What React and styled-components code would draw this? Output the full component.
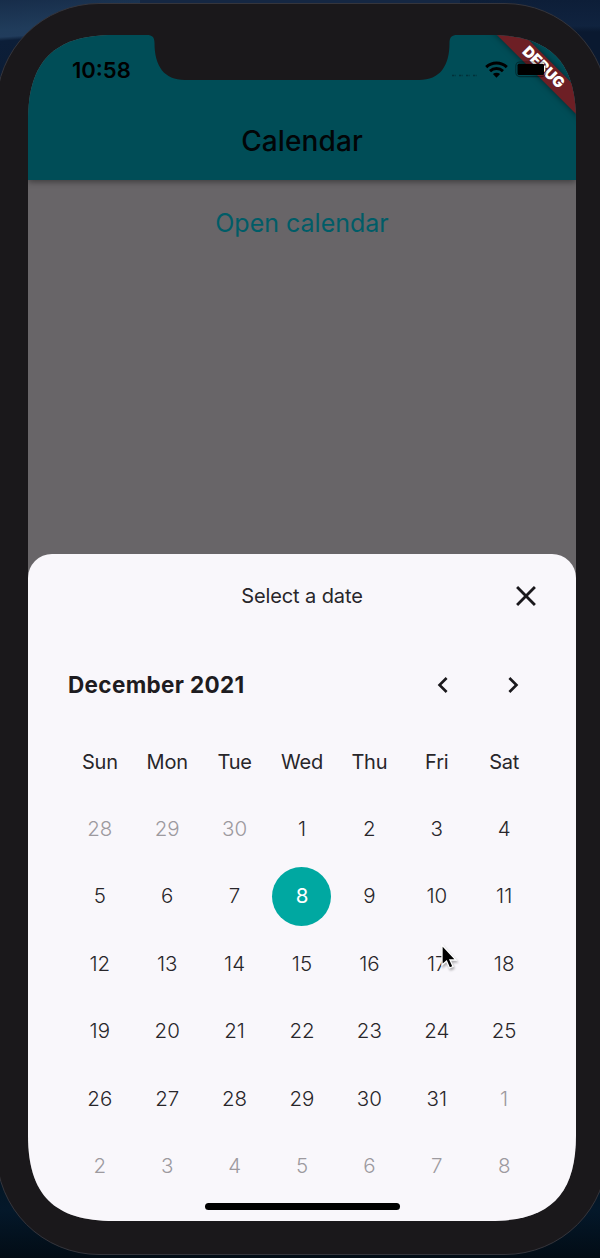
import React from "react";
import styled, { createGlobalStyle, css } from "styled-components";
import { MdClose, MdChevronLeft, MdChevronRight } from "react-icons/md";

const GlobalStyle = createGlobalStyle`
  * { box-sizing: border-box; }
  body { margin: 0; background: #06121f; }
  button { border: 0; padding: 0; margin: 0; background: none; font: inherit; color: inherit; }
`;

const Desktop = styled.div`
  width: 600px;
  height: 1258px;
  overflow: hidden;
  padding-top: 3px;
  font-family: Inter, "Liberation Sans", sans-serif;
  background:
    linear-gradient(176deg, #172d4a 0, #203c5b 30px, #213c5c 37px, #0c1e38 41px, #0b1b33 120px, transparent 160px) top left / 140px 200px no-repeat,
    linear-gradient(180deg, #0d1e38 0, #10233f 26px, #0a1930 32px, #0a1930 90px, transparent 160px) top right / 140px 200px no-repeat,
    linear-gradient(180deg, #152743 0, #152743 4px, #03141f 1150px, #04182a 1210px, #020c15 1258px);
`;

const Phone = styled.div`
  width: 612px;
  height: 1252px;
  margin-left: -4px;
  padding: 31px 31px 32px;
  border: 1px solid #35353c;
  border-radius: 103px;
  background: #1a181b;
`;

const Screen = styled.main`
  position: relative;
  display: flex;
  flex-direction: column;
  width: 548px;
  height: 1186px;
  background: #686568;
  clip-path: path("M0 86C0 26 26 0 86 0H462C522 0 548 26 548 86V1100C548 1160 522 1186 462 1186H86C26 1186 0 1160 0 1100Z");
`;

const AppBar = styled.header`
  display: flex;
  flex-direction: column;
  flex: none;
  height: 145px;
  background: #004d57;
  box-shadow: 0 2px 6px rgba(0, 0, 0, 0.4);
`;

const StatusBar = styled.div`
  position: relative;
  z-index: 2;
  display: flex;
  align-items: center;
  justify-content: space-between;
  height: 70px;
  padding: 0 29px 0 44px;
  color: #000;
`;

const Clock = styled.span`
  font-size: 22px;
  font-weight: 600;
  line-height: 26px;
  letter-spacing: 0;
`;

const StatusIcons = styled.div`
  display: flex;
  align-items: center;
  gap: 7px;
  margin-top: -2px;
`;

const AppTitle = styled.h1`
  margin: 0;
  padding-top: 18px;
  text-align: center;
  font-size: 28px;
  line-height: 36px;
  font-weight: 450;
  letter-spacing: 0.1px;
  color: #020507;
`;

const Notch = styled.svg`
  position: absolute;
  top: 0;
  left: 119px;
  z-index: 3;
`;

const DebugBanner = styled.div`
  position: absolute;
  z-index: 1;
  top: 23.5px;
  left: 435.5px;
  width: 160px;
  height: 18.5px;
  padding-right: 2px;
  transform: rotate(45deg);
  background: #6d1f25;
  box-shadow: 0 0 6px rgba(0, 0, 0, 0.5);
  color: #fff;
  text-align: center;
  font-size: 15px;
  font-weight: 900;
  line-height: 18.5px;
`;

const OpenButton = styled.button`
  align-self: center;
  margin-top: 27px;
  font-size: 25px;
  line-height: 32px;
  letter-spacing: 0;
  color: #005c67;
`;

const Sheet = styled.section`
  display: flex;
  flex-direction: column;
  height: 667px;
  margin-top: auto;
  border-radius: 24px 24px 0 0;
  background: #f9f7fb;
  color: #28262a;
`;

const SheetHeader = styled.div`
  display: grid;
  grid-template-columns: 1fr auto 1fr;
  align-items: center;
  height: 84px;
  padding: 0 33.5px;
`;

const SheetTitle = styled.h2`
  grid-column: 2;
  margin: 0;
  font-size: 20px;
  line-height: 24px;
  font-weight: 400;
  letter-spacing: -0.1px;
`;

const IconButton = styled.button`
  display: flex;
  justify-self: end;
  color: #1a181c;
  svg { display: block; }
`;

const MonthBar = styled.div`
  display: flex;
  align-items: center;
  height: 61px;
  margin-top: 16px;
  padding: 0 47px 0 40px;
`;

const MonthName = styled.h3`
  flex: 1;
  margin: 0;
  font-size: 22.5px;
  line-height: 28px;
  font-weight: 650;
  letter-spacing: 0.35px;
  color: #1e1c20;
`;

const MonthArrows = styled.div`
  display: flex;
  gap: 38.5px;
`;

const DayGrid = styled.div`
  display: grid;
  grid-template-columns: repeat(7, 67.4px);
  grid-auto-rows: 67.4px;
  justify-content: center;
  margin-top: 13px;
`;

const Weekday = styled.div`
  display: flex;
  align-items: center;
  justify-content: center;
  font-size: 20px;
  letter-spacing: -0.2px;
`;

const DayCell = styled.div`
  display: flex;
  align-items: center;
  justify-content: center;
`;

const Day = styled.button`
  width: 59px;
  height: 59px;
  border-radius: 50%;
  font-size: 20.5px;
  line-height: 24px;
  font-weight: 300;
  color: ${(p) => (p.$outside ? "#9d9a9f" : "#28262a")};
  ${(p) => p.$selected && css`
    background: #00a8a1;
    color: #fff;
    font-weight: 400;
  `}
`;

const HomeIndicator = styled.div`
  position: absolute;
  left: 176.5px;
  bottom: 11px;
  width: 195.5px;
  height: 7px;
  border-radius: 4px;
  background: #000;
`;

const Pointer = styled.svg`
  position: absolute;
  left: 412px;
  top: 908px;
  filter: drop-shadow(1px 2px 1px rgba(0, 0, 0, 0.3));
`;

const weekdays = ["Sun", "Mon", "Tue", "Wed", "Thu", "Fri", "Sat"];
const days = Array.from({ length: 42 }, (_, i) => {
  if (i < 3) return { label: 28 + i, outside: true };
  if (i < 34) return { label: i - 2, outside: false };
  return { label: i - 33, outside: true };
});

const SignalIcon = () => (
  <svg width="26" height="18" viewBox="0 0 26 18">
    <path d="M0 15.500h4M7 15.500h4M14 15.500h4M21 15.500h4" stroke="#00323a" strokeWidth="1.600" strokeDasharray="2.400 1" />
  </svg>
);

const WifiIcon = () => (
  <svg width="23" height="17" viewBox="0 0 23 17">
    <g fill="none" stroke="#000" strokeWidth="2.900">
      <path d="M1.200 6.100a14.800 14.800 0 0 1 20.600 0" />
      <path d="M5 10.100a9.400 9.400 0 0 1 13 0" />
    </g>
    <path d="M11.500 16.800 7.900 13.100a5.200 5.200 0 0 1 7.200 0z" />
  </svg>
);

const BatteryIcon = () => (
  <svg width="32" height="17" viewBox="0 0 32 17">
    <rect x="0.800" y="1" width="30" height="14.600" rx="4" fill="none" stroke="#000" strokeOpacity="0.400" strokeWidth="1.100" />
    <rect x="2.500" y="2.800" width="26.500" height="11.200" rx="1.500" />
  </svg>
);

export default function App() {
  return (
    <>
      <GlobalStyle />
      <Desktop>
        <Phone>
          <Screen>
            <AppBar>
              <StatusBar>
                <Clock>10:58</Clock>
                <StatusIcons>
                  <SignalIcon />
                  <WifiIcon />
                  <BatteryIcon />
                </StatusIcons>
              </StatusBar>
              <AppTitle>Calendar</AppTitle>
            </AppBar>
            <Notch width="310" height="45" viewBox="0 0 310 45">
              <path d="M0 0C5 0 7.500 2 7.500 8C7.500 31 17 45 38 45H272C293 45 302.500 31 302.500 8C302.500 2 305 0 310 0Z" fill="#1a181b" />
            </Notch>
            <DebugBanner>DEBUG</DebugBanner>
            <OpenButton>Open calendar</OpenButton>
            <Sheet>
              <SheetHeader>
                <SheetTitle>Select a date</SheetTitle>
                <IconButton aria-label="Close"><MdClose size={34} /></IconButton>
              </SheetHeader>
              <MonthBar>
                <MonthName>December 2021</MonthName>
                <MonthArrows>
                  <IconButton aria-label="Previous month"><MdChevronLeft size={32} /></IconButton>
                  <IconButton aria-label="Next month"><MdChevronRight size={32} /></IconButton>
                </MonthArrows>
              </MonthBar>
              <DayGrid>
                {weekdays.map((name) => <Weekday key={name}>{name}</Weekday>)}
                {days.map((day, i) => (
                  <DayCell key={i}>
                    <Day $outside={day.outside} $selected={!day.outside && day.label === 8}>{day.label}</Day>
                  </DayCell>
                ))}
              </DayGrid>
            </Sheet>
            <HomeIndicator />
            <Pointer width="20" height="28" viewBox="0 0 20 28">
              <path d="M2 2V22L6.500 18L9.500 25L13 23.500L10 17H16Z" fill="#000" stroke="#fff" strokeWidth="1.300" />
            </Pointer>
          </Screen>
        </Phone>
      </Desktop>
    </>
  );
}
